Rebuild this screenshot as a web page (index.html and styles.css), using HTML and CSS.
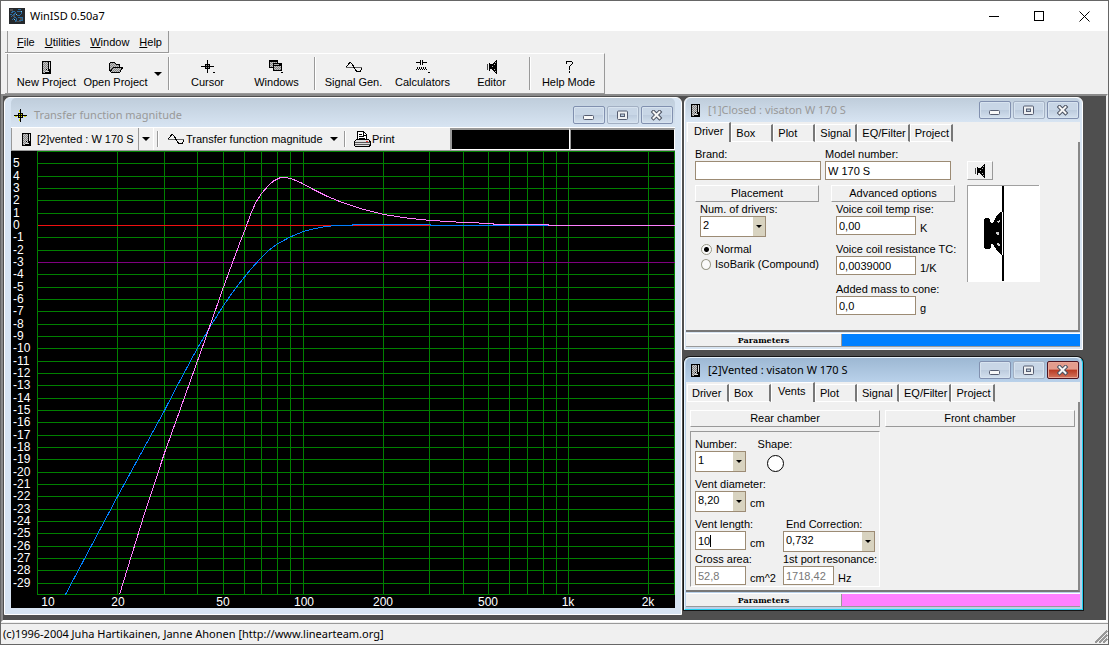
FILE: index.html
```html
<!DOCTYPE html>
<html lang="en">
<head>
<meta charset="utf-8">
<title>WinISD 0.50a7</title>
<link rel="stylesheet" href="styles.css">
</head>
<body>
<svg class="defs" aria-hidden="true">
  <defs>
    <pattern id="dither" width="2" height="2" patternUnits="userSpaceOnUse"><rect width="2" height="2" fill="#c6c6c6"/><path d="M0 0h1v1H0zM1 1h1v1H1z" fill="#858585"/></pattern>
    <symbol id="box" viewBox="0 0 10 13"><path d="M0 0h9v13H0z" fill="#000"/><path d="M1 1h5v11H1z" fill="url(#dither)"/><path d="M7 1h1v7H7zM4 10h3v1H4zM5 8h1v1H5z" fill="#ddd"/><path d="M4 8h1v1H4zM3 11h5v1H3z" fill="#000"/></symbol>
    <symbol id="cursor" viewBox="0 0 13 13"><path d="M6 0h1v13H6zM0 6h13v1H0zM4 4h1v5H4zM8 4h1v5H8zM4 4h5v1H4zM4 8h5v1H4z" fill="#000"/><path d="M5 5h1v1H5zM7 5h1v1H7zM5 7h1v1H5zM7 7h1v1H7zM5 1h1v2H5zM5 10h1v2H5zM1 7h2v1H1zM10 7h2v1h-2z" fill="#d8d800"/></symbol>
    <symbol id="wave" viewBox="0 0 16 12"><path d="M0 6.500H16" stroke="#666" fill="none"/><path d="M.5 6C2 4 3 1.500 4.500 1.500S6.500 4 8 6.500 10 10.500 11.500 10.500H14L15.500 8.500V7" stroke="#000" fill="none"/></symbol>
    <symbol id="driver" viewBox="0 0 10 14"><path d="M3 4h2l4-4h1v14H9L5 9H3zM2 3h1v8H2z" fill="#000"/><path d="M0 4h1v6H0z" fill="#444"/><path d="M7 4h1v1H7zM5 6h1v1H5zM7 9h1v1H7zM8 2h1v1H8zM8 11h1v1H8z" fill="#bbb"/></symbol>
    <symbol id="min" viewBox="0 0 12 11"><rect x=".5" y="5.500" width="10" height="4" rx="1" fill="#f8f8f8" stroke="#555c70"/></symbol>
    <symbol id="max" viewBox="0 0 12 11"><rect x=".5" y="1" width="10" height="8.500" rx="1" fill="#eef0f2" stroke="#555c70"/><rect x="3.500" y="4" width="4" height="2.500" fill="#b9cadb" stroke="#555c70"/></symbol>
    <symbol id="close" viewBox="0 0 12 11"><path d="M2.500 2 8.500 8M8.500 2 2.500 8" stroke="#49505f" stroke-width="4" stroke-linecap="square"/><path d="M2.500 2 8.500 8M8.500 2 2.500 8" stroke="#f6f6f6" stroke-width="2" stroke-linecap="square"/></symbol>
  </defs>
</svg>
<div class="app">
  <header class="titlebar">
    <svg class="app-icon" viewBox="0 0 16 16"><path d="M0 0h16v16H0z" fill="#25282b"/><path d="M1 1h3v2H1zM6 13h6v1H6zM11 10h3v2h-3zM4 7h2v2H4z" fill="#4b4e50"/><path d="M2 5 5 3 7 5 4 7 2 9M8 3h3l2 2-2 2H8M3 12l3-3 2 2-2 3M9 9l4 0 1 3-4 1M9 1l3 1M1 7l2-1" fill="none" stroke="#2a6a9c"/><path d="M7 6h1v1H7zM12 3h1v1h-1zM5 11h1v1H5z" fill="#72c6ef"/></svg>
    <h1>WinISD 0.50a7</h1>
    <div class="sys">
      <button aria-label="Minimize"><svg viewBox="0 0 11 11"><path d="M0 5.500h10"/></svg></button>
      <button aria-label="Maximize"><svg viewBox="0 0 11 11"><path d="M.5.500h9v9h-9z"/></svg></button>
      <button aria-label="Close"><svg class="smooth" viewBox="0 0 11 11"><path d="M.5.500l10 10M10.500.500l-10 10"/></svg></button>
    </div>
  </header>
  <nav class="menu band">
    <button><u>F</u>ile</button><button><u>U</u>tilities</button><button><u>W</u>indow</button><button><u>H</u>elp</button>
  </nav>
  <div class="tools band">
    <button class="tool"><svg width="10" height="13"><use href="#box"/></svg>New Project</button>
    <button class="tool"><svg width="16" height="12" viewBox="0 0 16 12"><path d="M1 10V3l2-2h3l2 2h3v3h4l-3 5H3L1 9z" fill="url(#dither)" stroke="#000"/><path d="M2.500 10 6 6h6" fill="none" stroke="#000"/></svg>Open Project</button>
    <button class="drop" aria-label="Recent projects"></button>
    <i class="sep"></i>
    <button class="tool"><svg width="14" height="14" viewBox="0 0 14 14"><path d="M6 0h1v13H6zM0 6h13v1H0zM4 4h1v5H4zM8 4h1v5H8zM4 4h5v1H4zM4 8h5v1H4zM11 12h3l-1 1h-1z"/><path d="M5 5h1v1H5zM7 5h1v1H7zM5 7h1v1H5zM7 7h1v1H7z" fill="#999"/></svg>Cursor</button>
    <button class="tool"><svg width="15" height="14" viewBox="0 0 15 14"><path d="M.5.500h8v7h-8z" fill="url(#dither)" stroke="#000"/><path d="M0 0h9v2H0z"/><path d="M4.500 4.500h8v6h-8z" fill="url(#dither)" stroke="#000"/><path d="M4 3h9v3H4zM11 12h3l-1 1h-1z"/><path d="M5 4h5v1H5z" fill="#aaa"/></svg>Windows</button>
    <i class="sep"></i>
    <button class="tool"><svg width="16" height="12"><use href="#wave"/></svg>Signal Gen.</button>
    <button class="tool"><svg width="14" height="14" viewBox="0 0 14 14"><path d="M0 2h4v1H0zM7 2h4v1H7zM4 0h1v5H4zM6 0h1v5H6zM0 9h1v1H0zM1 7h1v2H1zM2 9h1v1H2zM3 7h1v2H3zM4 9h1v1H4zM5 7h1v2H5zM6 9h1v1H6zM7 7h1v2H7zM8 9h1v1H8zM9 7h1v2H9zM10 9h1v1h-1zM11 12h3l-1 1h-1z"/></svg>Calculators</button>
    <button class="tool"><svg width="10" height="14"><use href="#driver"/></svg>Editor</button>
    <i class="sep"></i>
    <button class="tool"><svg width="8" height="14" viewBox="0 0 8 14"><path d="M1 3.500V2L2 1h4l1 1v2L4 7v2.500M4 11v2" fill="none" stroke="#000"/></svg>Help Mode</button>
  </div>

  <main class="mdi">
    <section class="win plot" aria-label="Transfer function magnitude">
      <header class="cap"><svg class="cap-icon" width="13" height="13"><use href="#cursor"/></svg><h2>Transfer function magnitude</h2>
        <div class="ctl"><button aria-label="Minimize"><svg><use href="#min"/></svg></button><button class="dim" aria-label="Maximize"><svg><use href="#max"/></svg></button><button aria-label="Close"><svg><use href="#close"/></svg></button></div></header>
      <div class="plot-tools">
        <button class="pick"><svg width="10" height="13"><use href="#box"/></svg>[2]vented : W 170 S</button>
        <button class="drop boxed" aria-label="Choose project"></button>
        <i class="sep"></i>
        <button class="kind"><svg width="16" height="12"><use href="#wave"/></svg>Transfer function magnitude</button>
        <button class="drop" aria-label="Choose graph"></button>
        <i class="sep"></i>
        <button class="print"><svg width="17" height="16" viewBox="0 0 17 16"><path d="M3.500 7.500v-7h6l3 3v4" fill="#fff" stroke="#000"/><path d="M9.500 1v3h3M5 3.500h3M5 5.500h5M5 7.500h6" fill="none" stroke="#000"/><path d="M2.500 8.500h12l1.500 2v4l-1 1H2l-1.500-1v-4z" fill="#ddd" stroke="#000"/><path d="M1 11.500h15M1 13.500h15" stroke="#555"/><path d="M12 10h2v1h-2z" fill="#e33"/></svg>Print</button>
        <output class="read r1"></output><output class="read r2"></output>
      </div>
      <svg class="chart" viewBox="11 151 664 457" role="img" aria-label="Frequency response in decibels">
        <g class="grid">
          <path d="M37 151.500H675M37 163.500H675M37 176.500H675M37 188.500H675M37 200.500H675M37 213.500H675M37 237.500H675M37 250.500H675M37 274.500H675M37 287.500H675M37 299.500H675M37 311.500H675M37 324.500H675M37 336.500H675M37 348.500H675M37 361.500H675M37 373.500H675M37 385.500H675M37 398.500H675M37 410.500H675M37 422.500H675M37 435.500H675M37 447.500H675M37 459.500H675M37 472.500H675M37 484.500H675M37 496.500H675M37 509.500H675M37 521.500H675M37 533.500H675M37 546.500H675M37 558.500H675M37 570.500H675M37 583.500H675M37 594.500H675"/>
          <path d="M37.500 151V595M117.500 151V595M164.500 151V595M197.500 151V595M223.500 151V595M244.500 151V595M261.500 151V595M277.500 151V595M290.500 151V595M303.500 151V595M383.500 151V595M429.500 151V595M463.500 151V595M488.500 151V595M509.500 151V595M527.500 151V595M543.500 151V595M556.500 151V595M568.500 151V595M648.500 151V595M674.500 151V595"/>
        </g>
        <path class="curve zero" d="M38 225.500H675"/>
        <path class="curve three" d="M38 262.500H675"/>
        <path class="curve blue" d="M65.500 594.500 117.500 496.500 164.500 410.500 175.500 389 197.500 348 211.500 324.500 223.500 305.500 232.500 292.500 240.500 282 250.500 269.500 260.500 258.500 268.500 250.500 277.500 243.800 290.500 236.800 303.500 231.500 313.500 228.800 323.500 227 334.500 225.500H352.500V224.500H430.500V225.500H675"/>
        <path class="curve pink" d="M119.500 594.500 142.500 520 164.500 453 187.500 389 197.500 361 205.500 338.500 223.500 287 240.500 241 245.500 228.500 250.500 214.500 255.500 203 261.500 193.500 268.500 185.500 273.500 181 279.500 178 282.500 177.500H285.500L291.500 178.800 300.500 182.500 313.500 189.500 326.500 196 340.500 201.800 360.500 208.500 383.500 214.500 410.500 218.500 431.500 220.500 464.500 222.500 492.500 223.500H493.500V224.500H548.500V225.500H675"/>
        <g class="tick">
          <text x="13" y="167">5</text><text x="13" y="180">4</text><text x="13" y="192">3</text><text x="13" y="204">2</text><text x="13" y="217">1</text><text x="13" y="229">0</text><text x="13" y="241">-1</text><text x="13" y="254">-2</text><text x="13" y="266">-3</text><text x="13" y="278">-4</text><text x="13" y="291">-5</text><text x="13" y="303">-6</text><text x="13" y="315">-7</text><text x="13" y="328">-8</text><text x="13" y="340">-9</text><text x="13" y="352">-10</text><text x="13" y="365">-11</text><text x="13" y="377">-12</text><text x="13" y="389">-13</text><text x="13" y="402">-14</text><text x="13" y="414">-15</text><text x="13" y="426">-16</text><text x="13" y="439">-17</text><text x="13" y="451">-18</text><text x="13" y="463">-19</text><text x="13" y="476">-20</text><text x="13" y="488">-21</text><text x="13" y="500">-22</text><text x="13" y="513">-23</text><text x="13" y="525">-24</text><text x="13" y="537">-25</text><text x="13" y="550">-26</text><text x="13" y="562">-27</text><text x="13" y="574">-28</text><text x="13" y="587">-29</text>
        </g>
        <g class="tick mid">
          <text x="48" y="606">10</text><text x="118" y="606">20</text><text x="223" y="606">50</text><text x="304" y="606">100</text><text x="383" y="606">200</text><text x="488" y="606">500</text><text x="568" y="606">1k</text><text x="648" y="606">2k</text>
        </g>
      </svg>
    </section>

    <section class="win proj closed" aria-label="Closed box project">
      <header class="cap"><svg class="cap-icon" width="10" height="13"><use href="#box"/></svg><h2>[1]Closed : visaton W 170 S</h2>
        <div class="ctl"><button aria-label="Minimize"><svg><use href="#min"/></svg></button><button class="dim" aria-label="Maximize"><svg><use href="#max"/></svg></button><button aria-label="Close"><svg><use href="#close"/></svg></button></div></header>
      <div class="tabs" role="tablist"><button role="tab" class="on" aria-selected="true">Driver</button><button role="tab">Box</button><button role="tab">Plot</button><button role="tab">Signal</button><button role="tab">EQ/Filter</button><button role="tab">Project</button></div>
      <div class="page driver">
        <div class="names">
          <div class="field wide"><label for="brand">Brand:</label><input id="brand" type="text" value=""></div>
          <div class="field wide"><label for="model">Model number:</label><input id="model" type="text" value="W 170 S"></div>
          <button class="btn open" aria-label="Open driver"><svg width="10" height="14"><use href="#driver"/></svg></button>
        </div>
        <div class="groups">
          <div class="group">
            <button class="btn">Placement</button>
            <div class="inner">
              <div class="field"><label for="num">Num. of drivers:</label><span class="combo w66"><select id="num"><option>2</option></select></span></div>
              <div class="radios">
                <label><input type="radio" name="place" checked>Normal</label>
                <label><input type="radio" name="place">IsoBarik (Compound)</label>
              </div>
            </div>
          </div>
          <div class="group">
            <button class="btn">Advanced options</button>
            <div class="inner adv">
              <div class="field"><label for="temp">Voice coil temp rise:</label><div class="pair"><input id="temp" type="text" value="0,00"><span>K</span></div></div>
              <div class="field"><label for="res">Voice coil resistance TC:</label><div class="pair"><input id="res" type="text" value="0,0039000"><span>1/K</span></div></div>
              <div class="field"><label for="mass">Added mass to cone:</label><div class="pair"><input id="mass" type="text" value="0,0"><span>g</span></div></div>
            </div>
          </div>
          <svg class="pic" viewBox="0 0 73 97"><path d="M0 0h73v97H0z" fill="#fff"/><path d="M.5 97V.500H72" fill="none" stroke="#a0a0a0"/><path d="M35 1h2v95h-2zM36 27h-2l-4 3-4 8h-1l-2-1v-2l-2-2h-3l-1 2v28l1 1h4l2-2v-3h2l3 5 3 4 2 2h2z"/><path d="M30 36l3-1v2l-2 1zM29 47h3v3h-2l-1-1zM30 58l3 1v2h-2z" fill="#ccc"/></svg>
        </div>
      </div>
      <footer class="foot"><button>Parameters</button><div class="swatch"></div></footer>
    </section>

    <section class="win proj vented" aria-label="Vented box project">
      <header class="cap"><svg class="cap-icon" width="10" height="13"><use href="#box"/></svg><h2>[2]Vented : visaton W 170 S</h2>
        <div class="ctl"><button aria-label="Minimize"><svg><use href="#min"/></svg></button><button class="dim" aria-label="Maximize"><svg><use href="#max"/></svg></button><button class="red" aria-label="Close"><svg><use href="#close"/></svg></button></div></header>
      <div class="tabs" role="tablist"><button role="tab">Driver</button><button role="tab">Box</button><button role="tab" class="on" aria-selected="true">Vents</button><button role="tab">Plot</button><button role="tab">Signal</button><button role="tab">EQ/Filter</button><button role="tab">Project</button></div>
      <div class="page vents">
        <div class="chamber">
          <button class="btn">Rear chamber</button>
          <div class="frame">
            <div class="field"><label for="count">Number:</label><span class="combo w51"><select id="count"><option>1</option></select></span></div>
            <div class="field shape"><span>Shape:</span><button class="round" aria-label="Round vent"></button></div>
            <div class="field"><label for="diam">Vent diameter:</label><div class="pair"><span class="combo w51"><select id="diam"><option>8,20</option></select></span><span>cm</span></div></div>
            <div></div>
            <div class="field"><label for="len">Vent length:</label><div class="pair"><span class="edit"><input id="len" type="text" value="10"></span><span>cm</span></div></div>
            <div class="field end"><label for="corr">End Correction:</label><span class="combo w92"><select id="corr"><option>0,732</option></select></span></div>
            <div class="field"><label for="area">Cross area:</label><div class="pair"><input id="area" type="text" value="52,8" disabled><span>cm^2</span></div></div>
            <div class="field"><label for="port">1st port resonance:</label><div class="pair"><input id="port" type="text" value="1718,42" disabled><span>Hz</span></div></div>
          </div>
        </div>
        <div class="chamber"><button class="btn">Front chamber</button></div>
      </div>
      <footer class="foot"><button>Parameters</button><div class="swatch"></div></footer>
    </section>
  </main>
  <footer class="status"><span>(c)1996-2004 Juha Hartikainen, Janne Ahonen [http://www.linearteam.org]</span>
    <svg class="grip" width="14" height="14" viewBox="0 0 14 14"><path d="M1 13 13 1M5 13l8-8M9 13l4-4" stroke="#999" stroke-width="2"/></svg></footer>
</div>
</body>
</html>
```
FILE: styles.css
```css
* { box-sizing: border-box; }
body { margin: 0; background: #f0f0f0; color: #000; font: 11px/13px "Liberation Sans", Arial, sans-serif; }
button, input, select { font: inherit; color: inherit; margin: 0; padding: 0; border: 0; border-radius: 0; background: none; }
h1, h2 { margin: 0; font: 11px/16px "Noto Sans", sans-serif; white-space: nowrap; }
svg { display: block; flex: none; shape-rendering: crispEdges; }
label, span, button { white-space: nowrap; }
.defs { position: absolute; width: 0; height: 0; }

.app { min-height: 100vh; display: flex; flex-direction: column; border: 1px solid #666; }
.titlebar { display: flex; align-items: center; height: 30px; padding: 0 1px 0 8px; gap: 5px; background: #fff; }
.app-icon { width: 16px; height: 16px; }
.sys { display: flex; margin-left: auto; }
.sys button { width: 45px; height: 28px; display: grid; place-items: center; }
.sys svg { width: 11px; height: 11px; fill: none; stroke: #000; }
.smooth { shape-rendering: auto; }

.band { align-self: flex-start; display: flex; border-right: 1px solid #999; border-bottom: 1px solid #999; margin-left: 4px; }
.band::before { content: ""; width: 2px; border-right: 1px solid #999; }
.menu { height: 22px; padding-right: 1px; }
.menu button { padding: 2px 5px 0; }
.menu::before { margin-right: 4px; }
.tools { height: 41px; border-top: 1px solid #fff; align-items: stretch; padding-right: 1px; }
.tools::before { margin-right: 4px; }
.tool { width: 69px; display: grid; grid-template-rows: 16px 13px; align-content: center; justify-items: center; align-items: center; gap: 1px; padding-top: 1px; }
.sep { flex: none; width: 2px; margin: 3px; border-left: 1px solid #999; border-right: 1px solid #fff; }
.drop { flex: none; width: 15px; display: grid; place-items: center; }
.drop::before { content: ""; border: 4px solid transparent; border-top-color: #000; border-bottom: 0; }

.mdi { flex: 1; position: relative; min-height: 528px; background: #4f4f4f; border: 2px solid #8a8a8a; border-right-color: #f0f0f0; border-bottom-color: #fff; }
.status { display: flex; align-items: center; justify-content: space-between; height: 21px; border-top: 1px solid #999; margin-top: 1px; padding-left: 2px; font: 11px/16px "Noto Sans", sans-serif; }
.grip { align-self: flex-end; }

.win { position: absolute; display: flex; flex-direction: column; background: #d7e4f2; border: 1px solid #fff; border-radius: 6px 6px 0 0; }
.cap { display: flex; align-items: center; background: linear-gradient(#bfcddb, #d7e4f2); border-radius: 5px 5px 0 0; }
.cap h2 { color: #999; flex: 1; }
.ctl { display: flex; gap: 2px; }
.ctl button { width: 32px; height: 18px; display: grid; place-items: center; border: 1px solid #8190af; border-radius: 2px; background: linear-gradient(#c8d6e6 50%, #bccbdd 50%, #d3e0ee); box-shadow: inset 0 0 0 1px #d7e3ef; }
.ctl .dim { border-color: #a3b0c3; }
.ctl svg { width: 12px; height: 11px; shape-rendering: auto; }
.ctl .red { background: linear-gradient(#e39c8d 45%, #b83a23 50%, #d4755e); border-color: #4d1421; box-shadow: inset 0 0 0 1px #e8a797; }

.plot { left: 1px; top: 1px; width: 678px; padding: 0 6px 6px; }
.plot .cap { height: 29px; padding: 5px 2px 0 3px; gap: 7px; }
.plot-tools { display: flex; height: 24px; background: #f0f0f0; border-top: 1px solid #fff; border-bottom: 1px solid #999; }
.plot-tools button { display: flex; align-items: center; }
.plot-tools .pick { flex: none; width: 128px; padding-left: 10px; gap: 5px; border-left: 1px solid #999; border-right: 1px solid #999; }
.plot-tools .drop { justify-content: center; }
.plot-tools .boxed { border-right: 1px solid #fff; }
.kind { flex: none; width: 164px; padding-left: 6px; gap: 2px; }
.print { flex: 1; padding-left: 5px; gap: 1px; }
.read { flex: none; height: 22px; background: #000; border: 2px solid #999; border-right: 1px solid #fff; border-bottom: 1px solid #fff; }
.r1 { width: 120px; }
.r2 { width: 105px; border-left-width: 1px; }
.chart { width: 100%; background: #000; }
.grid { stroke: #008000; }
.curve { fill: none; }
.zero { stroke: #f01010; }
.three { stroke: #800080; }
.blue { stroke: #0080ff; }
.pink { stroke: #ff80ff; }
.tick { fill: #fff; font: 12px "Liberation Sans", sans-serif; }
.mid { text-anchor: middle; }

.proj { left: 681px; width: 399px; padding: 0 2px 2px 1px; }
.closed { top: 1px; }
.vented { top: 261px; background: #b9d1ea; border-color: #e8f4fc #20d0f0 #20d0f0 #e8f4fc; box-shadow: 0 0 0 1px #151515; }
.vented .cap { background: linear-gradient(#9db8d3, #b9d1ea); }
.vented .cap h2 { color: #000; }
.proj .cap { height: 24px; padding: 0 1px 0 5px; gap: 7px; }
.tabs { display: flex; align-items: flex-end; height: 20px; padding-left: 1px; background: #f0f0f0; }
.tabs button { min-width: 42px; height: 18px; padding: 1px 2px 0 4px; text-align: left; border-top: 1px solid #fff; border-left: 1px solid #fff; border-right: 2px solid #777; border-bottom: 1px solid #fff; }
.tabs .on { height: 20px; min-width: 44px; padding: 0 6px 2px; border-bottom: 0; }
.page { height: 190px; background: #f0f0f0; border-right: 2px solid #888; border-bottom: 2px solid #777; }
.foot { display: flex; height: 14px; margin-top: 1px; border-top: 1px solid #fff; border-bottom: 1px solid #999; }
.foot button { width: 156px; background: #f0f0f0; border-right: 1px solid #999; font: bold 8px/11px "DejaVu Serif", serif; }
.swatch { flex: 1; background: #0080ff; }
.vented .swatch { background: #ff80ff; }

.btn { height: 17px; border: 1px solid #fff; border-right-color: #999; border-bottom-color: #999; display: grid; place-items: center; }
.field { display: flex; flex-direction: column; }
input[type="text"] { height: 19px; width: 100%; background: #fff; border: 1px solid #9c8b74; padding: 0 2px; }
input:disabled { color: #777; }
.combo { position: relative; display: block; flex: none; }
.combo select { appearance: none; width: 100%; height: 21px; display: block; padding: 0 2px 2px; border: 1px solid #9c8b74; background: linear-gradient(#d8d3c0, #d8d3c0) right / 12px 100% no-repeat #fff; }
.combo::after { content: ""; position: absolute; right: 4px; top: 9px; border: 3px solid transparent; border-top-color: #000; border-bottom: 0; pointer-events: none; }
.w66 { width: 66px; }
.w51 { width: 51px; }
.w92 { width: 92px; }
.pair { display: flex; gap: 4px; align-items: flex-start; }
.pair > span:last-child { padding-top: 6px; }

.driver { padding: 6px 0 0 9px; }
.names { display: flex; gap: 4px; align-items: flex-end; }
.names .wide { width: 126px; }
.open { width: 26px; height: 19px; margin-left: 12px; }
.groups { display: flex; gap: 12px; margin-top: 5px; }
.group { width: 124px; display: flex; flex-direction: column; }
.inner { padding: 1px 0 0 5px; }
.field label { height: 13px; }
.radios { display: flex; flex-direction: column; gap: 2px; margin: 6px 0 0 1px; }
.radios label { display: flex; align-items: center; gap: 4px; height: 13px; }
.radios input { appearance: none; width: 11px; height: 11px; border: 1px solid #998; border-radius: 50%; background: #fafafa; }
.radios input:checked { background: radial-gradient(#000 1px, #000 2px, #fafafa 3px); }
.adv { display: flex; flex-direction: column; gap: 8px; }
.adv input[type="text"] { width: 80px; }
.pic { width: 73px; height: 97px; }

.vents { display: flex; gap: 5px; padding: 8px 0 0 4px; }
.chamber { width: 190px; display: flex; flex-direction: column; gap: 4px; }
.frame { display: grid; grid-template-columns: 51px 92px; column-gap: 37px; grid-template-rows: 34px 34px 34px 32px; row-gap: 6px; height: 156px; padding: 6px 0 0 4px; border: 1px solid #fff; border-top-color: #999; border-left-color: #999; }
.frame .pair input[type="text"] { width: 51px; }
.frame > :nth-child(n+7) { margin-top: -5px; }
.shape { width: 34px; align-self: start; margin-left: -25px; gap: 4px; align-items: center; }
.round { width: 17px; height: 17px; border: 1px solid #000; border-radius: 50%; background: #fff; }
.end label { padding-left: 3px; }
.edit { position: relative; display: block; }
.edit::after { content: ""; position: absolute; left: 15px; top: 4px; width: 1px; height: 12px; background: #000; }
```
